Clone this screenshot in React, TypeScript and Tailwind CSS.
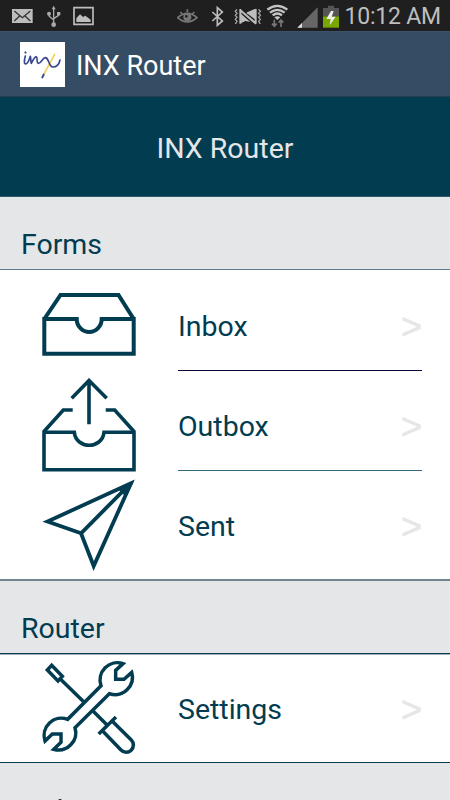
import type { ReactNode } from "react";

function InboxIcon() {
  return (
    <svg width="94" height="94" viewBox="0 0 94 94" fill="none" stroke="currentColor" strokeWidth="4">
      <path d="M2.3 41H34.7A12.5 13 0 0 0 59.7 41H91.7V75.7H2.3Z" />
      <path d="M2.3 41L18.5 17H76.5L91.7 41" />
    </svg>
  );
}

function OutboxIcon() {
  return (
    <svg width="94" height="94" viewBox="0 0 94 94" fill="none" stroke="currentColor" strokeWidth="3.6">
      <path d="M2 54.3H32.3C34 71.5 60.3 71.5 62 54.3H92V91.7H2Z" />
      <path d="M2 53.5L21.3 32H30.7M63.7 32H72.7L92 53.5" />
      <path d="M47 2V46.3M29.7 20.3L47 2.5L64.7 20.3" />
    </svg>
  );
}

function SentIcon() {
  return (
    <svg width="94" height="94" viewBox="0 0 94 94" fill="none" stroke="currentColor" strokeWidth="3.8" strokeMiterlimit="10">
      <path d="M89 5.3L5.5 43.5L39 55.3L51.7 88Z" />
      <path d="M39 55.3L86 8" />
      <path d="M92 3L77 12L84 19Z" fill="currentColor" stroke="none" />
    </svg>
  );
}

function SettingsIcon() {
  return (
    <svg className="overflow-visible" width="94" height="94" viewBox="66 36 282 282" fill="none" stroke="currentColor" strokeWidth="10.5">
      <path d="M243 110A52 52 0 0 1 309 44L287 64V91H312L335 70A52 52 0 0 1 268 134L165 236A52 52 0 0 1 101 301L123 280V255H97L75 276A52 52 0 0 1 143 211Z" />
      <path d="M95 49L127 82L114 96L82 63Z" />
      <path d="M121 90L191 158M219 186L262 229M288 204L236 255" />
      <path d="M277 217L334 273A21 21 0 0 1 303 303L248 246" />
    </svg>
  );
}

function Logo() {
  return (
    <svg className="bg-white" width="45" height="45" viewBox="0 0 135 135" fill="none" strokeLinecap="round" strokeLinejoin="round">
      <path d="M104 37L71 98" stroke="#f3cf5b" strokeWidth="5" />
      <path d="M16 42C12 56 12 66 17 66C24 66 28 52 31 43C33 50 32 60 34 64C38 56 44 44 49 44C54 46 48 62 55 64C64 64 68 46 77 47C88 50 86 76 99 75C110 75 117 67 120 54" stroke="#39478f" strokeWidth="5" />
      <path d="M16 31L17 32M71 98L67 106" stroke="#39478f" strokeWidth="6" />
    </svg>
  );
}

function StatusBar() {
  return (
    <div className="flex h-[31px] items-center justify-between bg-[#1f1f1f] pl-3 pr-[9px] pt-px">
      <svg width="84" height="22" viewBox="36 15 252 66" fill="none">
        <path d="M36 27H98V69H36Z" fill="#bdbdbd" />
        <path d="M43 33L67 53L91 33M43 63L59 48M91 63L75 48" stroke="#333" strokeWidth="4" />
        <path d="M161 25V74M147 41V48L161 60M176 41V46L161 56" stroke="#aaa" strokeWidth="4" />
        <path d="M161 17L155 28H167ZM171 36H181V46H171Z" fill="#aaa" />
        <circle cx="147" cy="41" r="6" fill="#aaa" />
        <circle cx="161" cy="74" r="7" fill="#aaa" />
        <path d="M222 23H279V73H222Z" stroke="#bdbdbd" strokeWidth="5" />
        <path d="M229 66V55L240 43L249 51L256 47L272 59V66Z" fill="#bdbdbd" />
      </svg>
      <div className="flex items-center gap-[5px]">
        <svg width="163" height="26" viewBox="36 9 489 78" fill="none">
          <path d="M38 53Q67 27 96 53Q67 79 38 53Z" stroke="#777" strokeWidth="5" />
          <path d="M46 36L52 42M67 28V37M88 36L82 42" stroke="#777" strokeWidth="5" />
          <circle cx="67" cy="52" r="12" fill="#777" />
          <circle cx="64" cy="49" r="4" fill="#1f1f1f" />
          <path d="M142 36L172 63L157 76V23L172 36L142 63" stroke="#bdbdbd" strokeWidth="5" />
          <path d="M226 27V71M226 31L273 71M272 27V71M226 67L240 60M246 40L272 29" stroke="#bdbdbd" strokeWidth="6" />
          <path d="M226 40L256 66L238 62H226ZM246 40L272 28V60Z" fill="#bdbdbd" />
          <path d="M216 28L211 34L216 40L211 46L216 52L211 58L216 64L211 72M281 28L286 34L281 40L286 46L281 52L286 58L281 64L286 72" stroke="#aaa" strokeWidth="4" />
          <path d="M307 29Q337 6 367 29M315 38Q337 21 359 38M323 46Q337 35 351 46" stroke="#c4c4c4" strokeWidth="7" />
          <path d="M328 52Q337 46 346 52L337 60Z" fill="#c4c4c4" />
          <path d="M328 59V78M321 71L328 79L335 71M348 81V61M341 68L348 60L355 68" stroke="#777" strokeWidth="5" />
          <path d="M458 22V83H397Z" fill="#666" />
          <path d="M411 69V83H397Z" fill="#ddd" />
          <path d="M474 24H489V17H507V24H522V49H474Z" fill="#555" />
          <path d="M474 49H522V83H474Z" fill="#7aa800" />
          <path d="M498 33L484 57H497L494 76L512 50H500L506 33Z" fill="#eee" />
        </svg>
        <span className="text-[23px] leading-[31px] tracking-[-0.2px] text-[#bebebe]">10:12 AM</span>
      </div>
    </div>
  );
}

function SectionHeader({ title }: { title: string }) {
  return (
    <h2 className="h-[72px] bg-[#e5e6e8] pl-[21px] pt-8 text-[28.5px] leading-8">
      {title}
    </h2>
  );
}

interface MenuRowProps {
  icon: ReactNode;
  label: string;
  divider?: string;
}

function MenuRow({ icon, label, divider = "border-transparent" }: MenuRowProps) {
  return (
    <li className="flex h-[100px] items-start pl-[42px] pr-7">
      <div className="mr-[42px] mt-[7px] shrink-0">{icon}</div>
      <div className={`flex h-full flex-1 items-center justify-between border-b pt-3 ${divider}`}>
        <span className="text-[28.5px] leading-8">{label}</span>
        <span className="font-['Liberation_Sans',sans-serif] text-[36px] leading-8 text-[#e5e6e6] [-webkit-text-stroke:0.5px_#e5e6e6]">&gt;</span>
      </div>
    </li>
  );
}

export default function App() {
  return (
    <div className="h-[800px] w-[450px] overflow-hidden bg-[#e5e6e8] font-['Roboto',sans-serif] text-[#023c50]">
      <StatusBar />
      <header className="flex h-[66px] items-center gap-[11px] border-b border-t border-b-[#263c50] border-t-[#3c5269] bg-[#354d64] pl-5">
        <Logo />
        <span className="pt-[5px] text-[27px] text-white">INX Router</span>
      </header>
      <h1 className="flex h-[100px] items-center justify-center border-b border-[#315a6b] bg-[#023c50] pt-[5px] text-[28.5px] text-[#e5e6e8]">
        INX Router
      </h1>

      <SectionHeader title="Forms" />
      <ul className="h-[312px] border-b-2 border-t border-b-[#718490] border-t-[#607a86] bg-white pt-px">
        <MenuRow icon={<InboxIcon />} label="Inbox" divider="border-[#06083a]" />
        <MenuRow icon={<OutboxIcon />} label="Outbox" divider="border-[#34687b]" />
        <MenuRow icon={<SentIcon />} label="Sent" />
      </ul>

      <SectionHeader title="Router" />
      <ul className="h-[110px] border-y border-[#023c50] bg-white shadow-[inset_0_1px_#9fb1ba]">
        <MenuRow icon={<SettingsIcon />} label="Settings" />
      </ul>

      <SectionHeader title="Help" />
    </div>
  );
}
